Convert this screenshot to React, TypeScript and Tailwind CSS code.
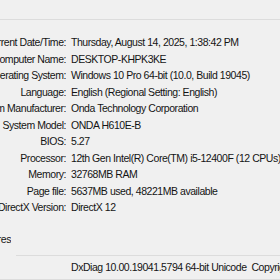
import React from "react";

const rows: [string, string][] = [
  ["Current Date/Time:", "Thursday, August 14, 2025, 1:38:42 PM"],
  ["Computer Name:", "DESKTOP-KHPK3KE"],
  ["Operating System:", "Windows 10 Pro 64-bit (10.0, Build 19045)"],
  ["Language:", "English (Regional Setting: English)"],
  ["System Manufacturer:", "Onda Technology Corporation"],
  ["System Model:", "ONDA H610E-B"],
  ["BIOS:", "5.27"],
  ["Processor:", "12th Gen Intel(R) Core(TM) i5-12400F (12 CPUs), ~2.5GHz"],
  ["Memory:", "32768MB RAM"],
  ["Page file:", "5637MB used, 48221MB available"],
  ["DirectX Version:", "DirectX 12"],
];

export default function App() {
  return (
    <div
      className="w-[280px] h-[280px] overflow-hidden bg-[#f0f0f0] text-[#141414] flex flex-col tracking-[-0.45px]"
      style={{ fontFamily: '"Liberation Sans", Arial, sans-serif' }}
    >
      <div className="h-[19px] shrink-0" />
      <div className="h-px bg-[#dcdcdc] shrink-0" />
      <div className="flex flex-col pt-[14px] text-[10.5px] leading-[16.5px]">
        {rows.map(([k, v]) => (
          <div key={k} className="flex whitespace-nowrap">
            <div className="w-[66px] shrink-0 flex justify-end overflow-hidden">
              <span className="shrink-0">{k}</span>
            </div>
            <div className="pl-[5px]">{v}</div>
          </div>
        ))}
      </div>
      <div className="flex justify-end whitespace-nowrap text-[10.5px] leading-[16px] mt-[15px] w-[11px] overflow-hidden">
        <span className="shrink-0">DirectX Features</span>
      </div>
      <div className="h-[10px] shrink-0" />
      <div className="h-px bg-[#dcdcdc] shrink-0 ml-[16px]" />
      <div className="text-[10.5px] leading-[23px] pl-[71px] whitespace-nowrap">
        DxDiag 10.00.19041.5794 64-bit Unicode&nbsp;&nbsp;Copyright © Microsoft. All rights reserved.
      </div>
      <div className="h-px bg-[#dcdcdc] shrink-0" />
      <div className="flex-1 bg-[#f0f0f0]" />
    </div>
  );
}
